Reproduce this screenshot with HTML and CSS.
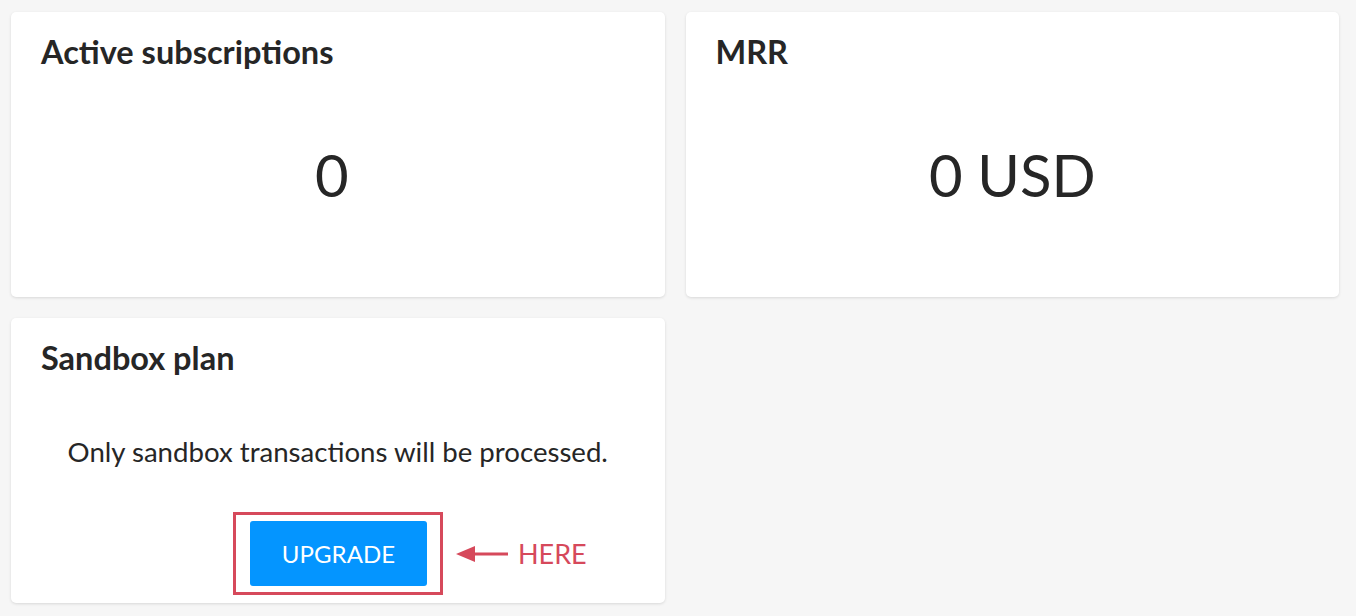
FILE: index.html
```html
<!DOCTYPE html>
<html>
<head>
<meta charset="utf-8">
<link rel="stylesheet" href="styles.css">
</head>
<body>
<div class="grid">
  <section class="card">
    <h2 class="card-title">Active subscriptions</h2>
    <div class="metric metric-count">0</div>
  </section>
  <section class="card">
    <h2 class="card-title">MRR</h2>
    <div class="metric">0 USD</div>
  </section>
  <section class="card">
    <h2 class="card-title">Sandbox plan</h2>
    <p class="plan-text">Only sandbox transactions will be processed.</p>
    <div class="plan-actions">
      <div class="highlight">
        <button class="upgrade">UPGRADE</button>
      </div>
      <div class="note">
        <svg class="arrow" width="52" height="18" viewBox="0 0 52 18"><path d="M0 9 L19 1 L19 17 Z" fill="#d6495b"/><rect x="18" y="7.5" width="34" height="3" fill="#d6495b"/></svg>
        <span class="note-text">HERE</span>
      </div>
    </div>
  </section>
</div>
</body>
</html>
```
FILE: styles.css
```css
* { box-sizing: border-box; }
html, body { margin: 0; height: 100%; }
body {
  background: #f6f6f6;
  font-family: Lato, "Noto Sans", sans-serif;
  color: #262626;
  padding: 12px 17px 0 11px;
}
.grid {
  display: grid;
  grid-template-columns: 1fr 1fr;
  grid-auto-rows: 285px;
  gap: 21px;
}
.card {
  background: #fff;
  border-radius: 5px;
  box-shadow: 0 1px 3px rgba(0,0,0,0.12);
  padding: 20px 30px 0 30px;
  display: flex;
  flex-direction: column;
}
.card-title {
  margin: 0;
  font-size: 32.5px;
  font-weight: 700;
  line-height: 39px;
  color: #262626;
}
.metric {
  text-align: center;
  font-size: 58px;
  line-height: 60px;
  margin-top: 74px;
  font-weight: 400;
}
.metric-count {
  padding-right: 12px;
}
.plan-text {
  margin: 58px 0 0;
  text-align: center;
  font-size: 27.6px;
  line-height: 34px;
}
.plan-actions {
  display: flex;
  align-items: center;
  margin-top: 43px;
  margin-left: 192px;
}
.highlight {
  border: 3px solid #d6495b;
  padding: 6px 13px 6px 14px;
}
.upgrade {
  display: block;
  width: 177px;
  height: 65px;
  border: none;
  border-radius: 3px;
  background: #0495ff;
  color: #fff;
  font-family: Lato, sans-serif;
  font-size: 24px;
  letter-spacing: 0.1px;
}
.note {
  display: flex;
  align-items: center;
  margin-left: 13px;
  gap: 10px;
}
.note-text {
  color: #d6495b;
  font-size: 27px;
}
```
